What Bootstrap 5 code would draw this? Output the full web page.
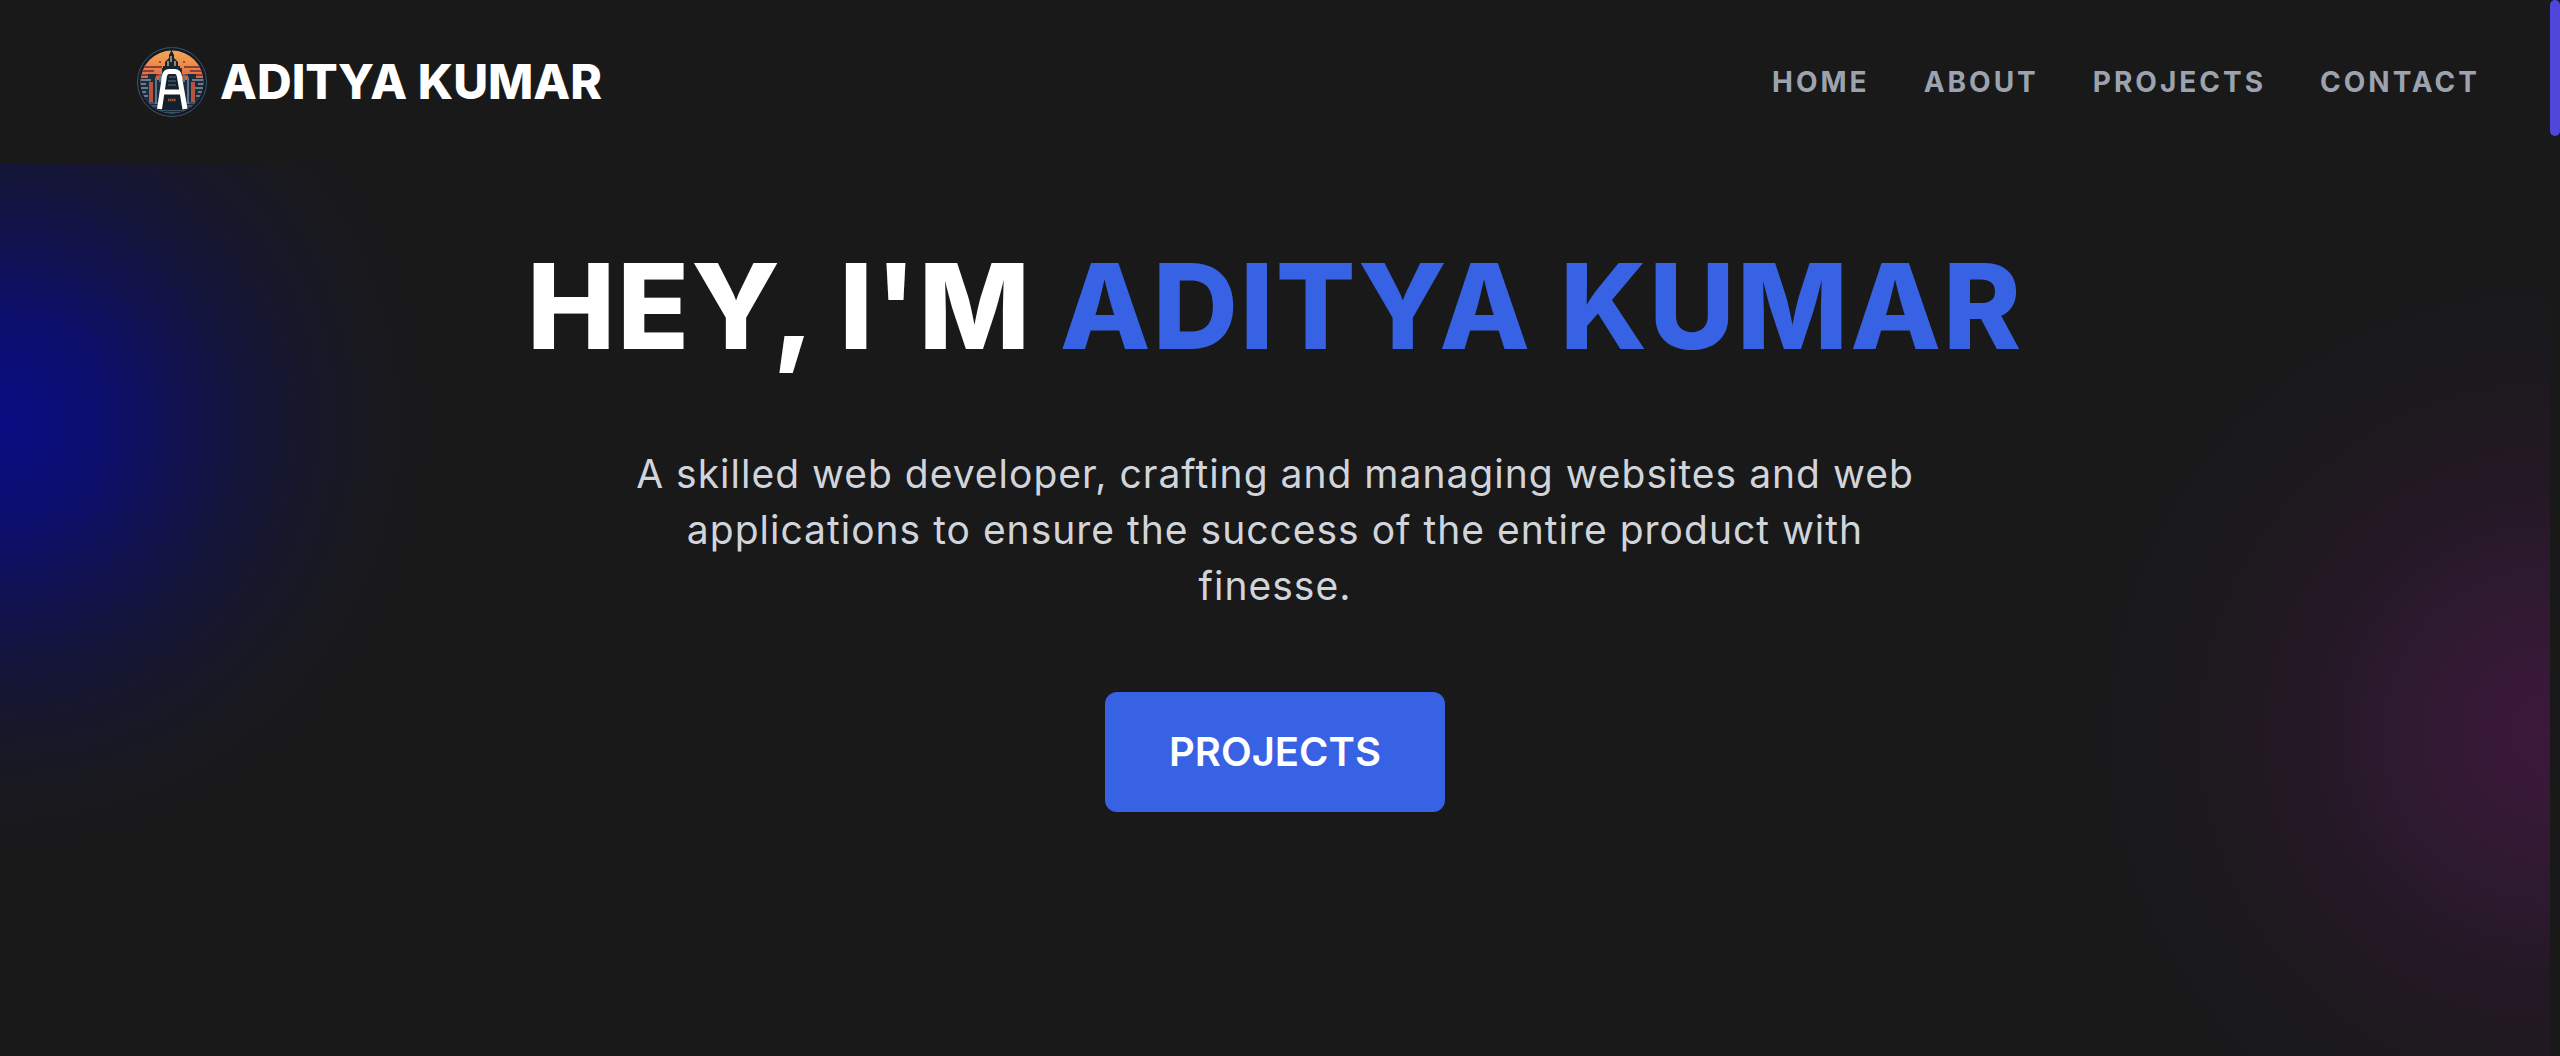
<!DOCTYPE html>
<html lang="en">
<head>
<meta charset="utf-8">
<meta name="viewport" content="width=device-width, initial-scale=1">
<title>Aditya Kumar</title>
<link rel="stylesheet" href="https://cdn.jsdelivr.net/npm/bootstrap@5.3.0/dist/css/bootstrap.min.css">
<style>
  :root { --page: #19191a; --accent: #3762e3; --rail: 10px; }
  body {
    background: var(--page);
    color: #fff;
    font-family: Inter, "Liberation Sans", sans-serif;
    padding-right: var(--rail);
  }
  .site-bar { padding: 40px 70px 40px 132px; background: var(--page); }
  .site-logo { width: 80px; height: 84px; }
  .site-name { font-size: 48px; line-height: 60px; font-weight: 800; }
  .site-links { gap: 54px; }
  .site-links .nav-link {
    padding: 0;
    color: #9ca3af;
    font-size: 28px;
    line-height: 40px;
    letter-spacing: 3px;
  }
  .site-links .nav-link:hover { color: #fff; }
  .hero {
    padding: 72px 24px 0;
    background:
      radial-gradient(circle 440px at 0 258px, #0a0c82 0, #0b0d7c 9%, #0d0f6b 25%, #11124f 41%, #14153a 55%, #17172b 69%, #191920 84%, #19191a00 100%),
      radial-gradient(circle 470px at 100% 570px, #3c183b 0, #361936 16%, #2c1a2e 35%, #241825 53%, #1e191f 70%, #1a191d 86%, #19191a00 100%);
  }
  .hero-title { font-size: 118px; line-height: 140px; font-weight: 800; letter-spacing: 2px; margin-bottom: 70px; }
  .hero-title span { color: var(--accent); }
  .hero-text {
    max-width: 1300px;
    margin-bottom: 78px;
    color: #d1d5db;
    font-size: 39px;
    line-height: 56px;
    letter-spacing: 1px;
  }
  .hero-btn {
    --bs-btn-bg: var(--accent);
    --bs-btn-hover-bg: #2f56cc;
    --bs-btn-border-width: 0;
    --bs-btn-border-radius: 12px;
    padding: 30px 64px;
    font-size: 40px;
    line-height: 60px;
  }
  .scroll-thumb { width: var(--rail); height: 136px; background: #4f46dc; border-radius: 5px; }
</style>
<script src="https://cdn.jsdelivr.net/npm/bootstrap@5.3.0/dist/js/bootstrap.bundle.min.js" defer></script>
</head>
<body class="d-flex flex-column min-vh-100">
  <header class="site-bar d-flex flex-wrap align-items-center justify-content-between">
    <a href="#home" class="d-flex align-items-center text-white text-decoration-none">
      <svg class="site-logo" viewBox="0 0 80 84" aria-hidden="true">
        <defs>
          <linearGradient id="dusk" x1="0" y1="0" x2="0" y2="1">
            <stop offset="0" stop-color="#f8bd62"/><stop offset=".3" stop-color="#ee8a48"/><stop offset=".5" stop-color="#d9573f"/>
          </linearGradient>
          <clipPath id="disc"><circle cx="40" cy="42" r="31.500"/></clipPath>
        </defs>
        <circle cx="40" cy="42" r="34.500" fill="#101c2a" stroke="#3c5666" stroke-width="1"/>
        <g clip-path="url(#disc)">
          <rect width="80" height="84" fill="url(#dusk)"/>
          <path d="M4 27h26M52 27h24M4 31h18M58 31h20M4 35h28M50 35h26" stroke="#6b2c35" stroke-width="1.600"/>
          <path d="M0 38h16v-4h8v6h6v-12h20v12h6v-6h8v4h16v46H0z" fill="#1b2c3e"/>
          <path d="M4 40h15M60 40h16M4 44h10M66 44h12M4 48h12M63 48h14M4 52h10M66 52h12M4 56h12M64 56h12" stroke="#8795a0" stroke-width="1.300"/>
          <path d="M19 42v20M61 42v20" stroke="#b8533d" stroke-width="4"/>
          <path d="M24 37v27M56 37v27M28 34v8M52 34v8" stroke="#617485" stroke-width="2"/>
          <path d="M14 63h50M12 66h56M18 70h44M22 73h36" stroke="#62788c" stroke-width="1.200"/>
        </g>
        <path d="M39 4h1v7l2 4v3l4 4v4h2v8H31v-8h2v-4l4-4v-3l2-4z" fill="#18242f"/>
        <path d="M36 21v5M39 16v6M43 21v5" stroke="#bdb49b" stroke-width="1.400"/>
        <path d="M34 31h12l8 39H26z" fill="#14202c"/>
        <path d="M37 37h7M36 41h8M36 45h8" stroke="#405467" stroke-width="1.500"/>
        <path d="M27.500 69l5-33q.8-4.500 4.500-4.500h6q3.500 0 4.300 4.500L53 69M31 52h18" fill="none" stroke="#fff" stroke-width="5"/>
        <path d="M36 60h8" stroke="#a45b3c" stroke-width="2.500" stroke-dasharray="1.500 .5"/>
        <circle cx="28" cy="22" r="1" fill="#71352d"/><circle cx="52" cy="22" r="1" fill="#71352d"/>
      </svg>
      <span class="site-name ms-2">ADITYA KUMAR</span>
    </a>
    <nav class="nav site-links fw-bold" aria-label="Main">
      <a class="nav-link" href="#home">HOME</a>
      <a class="nav-link" href="#about">ABOUT</a>
      <a class="nav-link" href="#projects">PROJECTS</a>
      <a class="nav-link" href="#contact">CONTACT</a>
    </nav>
  </header>
  <main id="home" class="hero flex-grow-1 text-center">
    <h1 class="hero-title">HEY, I'M <span>ADITYA KUMAR</span></h1>
    <p class="hero-text mx-auto">A skilled web developer, crafting and managing websites and web applications to ensure the success of the entire product with finesse.</p>
    <button type="button" class="btn btn-primary hero-btn fw-semibold">PROJECTS</button>
  </main>
  <div class="scroll-thumb position-fixed top-0 end-0" aria-hidden="true"></div>
</body>
</html>
